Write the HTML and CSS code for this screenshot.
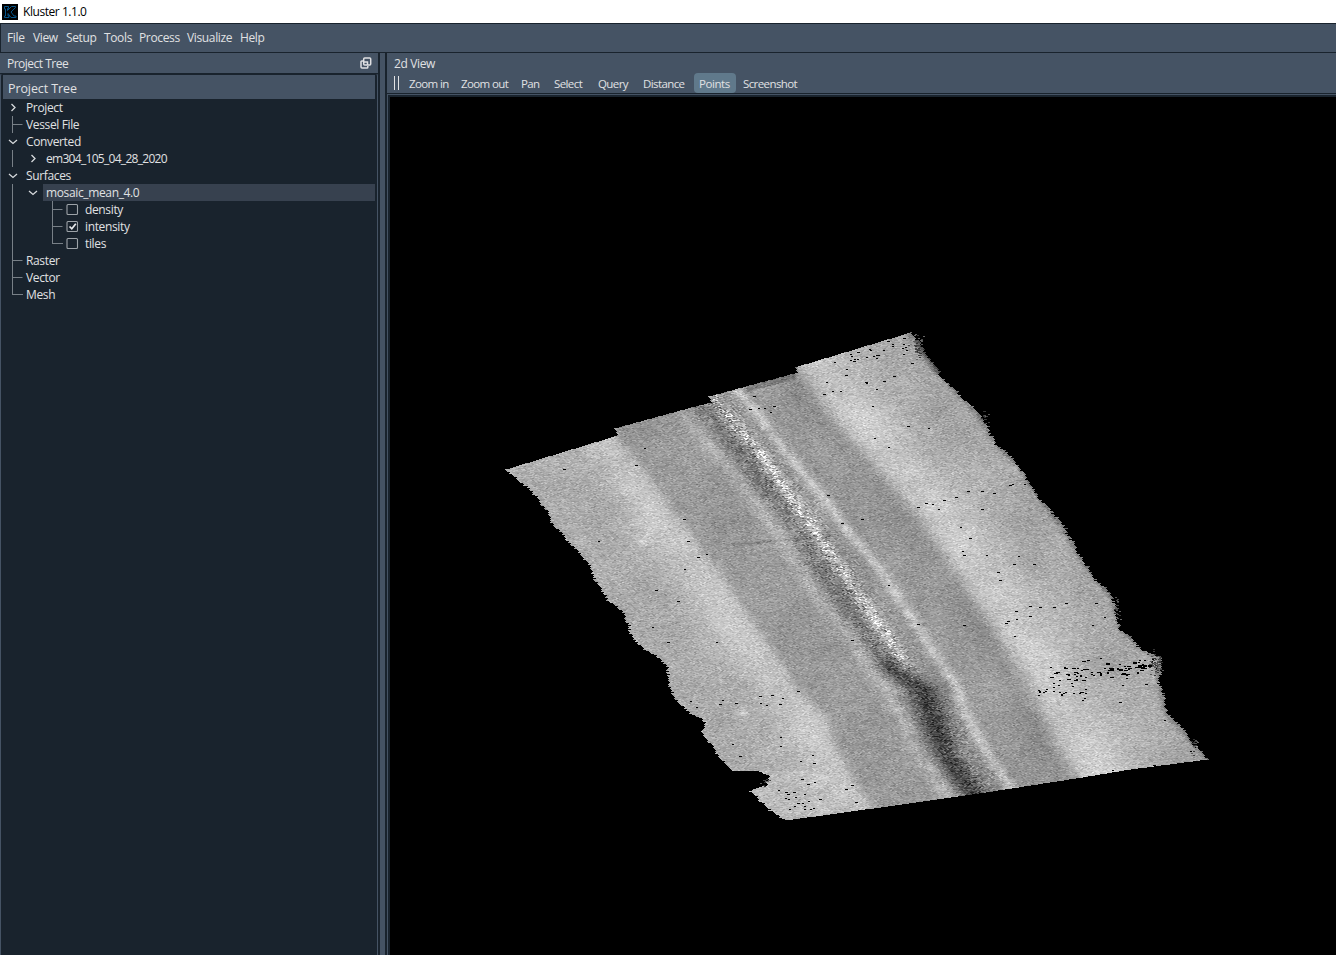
FILE: index.html
```html
<!DOCTYPE html>
<html lang="en">
<head>
<meta charset="utf-8">
<title>Kluster 1.1.0</title>
<link rel="stylesheet" href="styles.css">
</head>
<body>
<div class="window">
  <header class="titlebar">
    <svg class="logo" width="16" height="16" viewBox="0 0 16 16"><rect width="16" height="16" fill="#000"/><path d="M2.500 2.500h4v2h-1v2l4-4h4v1l-4.500 4.500 3 4h2v1.500h-5l-3-4v2.500h1v1.500h-4.500v-1.500h1v-7h-1z" fill="none" stroke="#07568b" stroke-width="1"/></svg>
    <span>Kluster 1.1.0</span>
  </header>
  <nav class="menubar">
    <span class="m-file">File</span><span class="m-view">View</span><span class="m-setup">Setup</span><span class="m-tools">Tools</span><span class="m-process">Process</span><span class="m-visualize">Visualize</span><span>Help</span>
  </nav>
  <main class="workspace">
    <aside class="dock">
      <div class="dock-title"><span>Project Tree</span>
        <svg width="12" height="12" viewBox="0 0 12 12" fill="none" stroke="#e0e1e3" stroke-width="1.500"><rect x="3.700" y="1" width="7" height="7" rx="1"/><path d="M3 4H1.700Q1 4 1 4.700V10q0 1 1 1h5q.8 0 .8-.8V9"/><path d="M4 5h3.500v3"/></svg>
      </div>
      <div class="tree-frame">
        <div class="tree-head">Project Tree</div>
        <div class="tree">
          <svg class="branches" width="80" height="204" viewBox="0 0 80 204" fill="none">
            <g stroke="#788087" stroke-width="1">
              <path d="M10.500 17v17M10.500 51v17M10.500 85v111M10.500 25.500h10M10.500 161.500h10M10.500 178.500h10M10 195.500h11"/>
              <path d="M50.500 102v43M50.500 110.500h10M50.500 127.500h10M50 144.500h11"/>
            </g>
            <g stroke="#d7dadd" stroke-width="1.300">
              <path d="M9.500 5l3.500 3.500L9.500 12M29.500 56l3.500 3.500L29.500 63"/>
              <path d="M7 41l4 3.500 4-3.500M7 75l4 3.500 4-3.500M27 92l4 3.500 4-3.500"/>
            </g>
            <g stroke="#9da3a8" stroke-width="1.100">
              <rect x="65" y="105.500" width="10.500" height="10" rx="1"/><rect x="65" y="122.500" width="10.500" height="10" rx="1"/><rect x="65" y="139.500" width="10.500" height="10" rx="1"/>
            </g>
            <path d="M67.500 127.500l2.300 2.300 4-5" stroke="#e8eaec" stroke-width="1.700"/>
          </svg>
          <div class="row l1">Project</div>
          <div class="row l1">Vessel File</div>
          <div class="row l1">Converted</div>
          <div class="row l2 tight">em304_105_04_28_2020</div>
          <div class="row l1">Surfaces</div>
          <div class="row l2 selected">mosaic_mean_4.0</div>
          <div class="row l3">density</div>
          <div class="row l3">intensity</div>
          <div class="row l3">tiles</div>
          <div class="row l1">Raster</div>
          <div class="row l1">Vector</div>
          <div class="row l1">Mesh</div>
        </div>
      </div>
    </aside>
    <div class="splitter"></div>
    <section class="view">
      <div class="view-title">2d View</div>
      <div class="toolbar">
        <i class="grip"></i>
        <span class="t-in">Zoom in</span><span class="t-out">Zoom out</span><span class="t-pan">Pan</span><span class="t-select">Select</span><span class="t-query">Query</span><span class="t-distance">Distance</span><span class="t-points">Points</span><span class="t-shot">Screenshot</span>
      </div>
      <div class="map"><canvas id="mosaic" width="946" height="858"></canvas></div>
    </section>
  </main>
</div>
<script src="mosaic.js"></script>
</body>
</html>
```
FILE: styles.css
```css
* { box-sizing: border-box; }
body { margin: 0; overflow: hidden; background: #19232d; }
.window {
  width: 1336px; height: 955px; display: flex; flex-direction: column;
  font: 12px/17px "Open Sans", "Noto Sans", sans-serif;
  letter-spacing: -0.36px; color: #e0e1e3; white-space: nowrap;
}
.titlebar {
  height: 23px; background: #fff; color: #000; display: flex;
  align-items: center; gap: 5px; padding-left: 2px; flex: none; letter-spacing: -0.45px;
}
.logo { display: block; }
.menubar {
  height: 30px; flex: none; background: #455364; display: flex; align-items: center;
  border: 1px solid #19232d; border-right: 0; padding: 0 0 1px 6px;
}
.m-file { width: 26px; }
.m-view { width: 33px; }
.m-setup { width: 38px; }
.m-tools { width: 35px; }
.m-process { width: 48px; }
.m-visualize { width: 53px; }
.workspace { flex: 1; min-height: 0; display: flex; }
.dock { width: 378px; display: flex; flex-direction: column; }
.dock-title {
  height: 20px; background: #455364; display: flex; align-items: center;
  justify-content: space-between; padding: 1px 6px 0 7px; letter-spacing: -0.5px;
}
.dock-title svg { margin-top: -2px; }
.tree-frame {
  flex: 1; border: 1px solid #455364; border-top-color: #19232d; border-bottom: 0;
  border-radius: 3px 3px 0 0; padding: 1px 2px 0 1px; background: #19232d;
}
.tree-head {
  height: 24px; margin-left: 1px; background: #455364; padding: 5px 0 0 5px;
  font-size: 12.500px; letter-spacing: -0.1px;
}
.tree { display: flex; flex-direction: column; position: relative; }
.branches { position: absolute; left: 0; top: 0; }
.row { height: 17px; }
.l1 { padding-left: 24px; }
.l2 { margin-left: 41px; padding-left: 3px; }
.tight { letter-spacing: -0.7px; }
.l3 { padding-left: 83px; }
.selected { background: #37414f; }
.splitter {
  width: 9px; flex: none; background: #455364;
  border-left: 2px solid #19232d; border-right: 2px solid #19232d;
}
.view { flex: 1; display: flex; flex-direction: column; background: #455364; }
.view-title { height: 20px; padding: 2px 0 0 7px; }
.toolbar {
  height: 21px; border-bottom: 1px solid #19232d; display: flex; align-items: center;
  padding-left: 7px; font-size: 11.500px; letter-spacing: -0.6px; line-height: 20px;
}
.toolbar span { padding-top: 1px; }
.grip { width: 5px; height: 14px; margin-right: 10px; border: 1px solid #e0e1e3; border-width: 0 1px; }
.t-in { width: 52px; }
.t-out { width: 60px; }
.t-pan { width: 33px; }
.t-select { width: 44px; }
.t-query { width: 45px; }
.t-distance { width: 51px; }
.toolbar .t-points { width: 42px; height: 20px; padding-left: 5px; background: #60798b; border-radius: 4px; letter-spacing: -0.45px; }
.t-shot { padding-left: 7px; }
.map {
  flex: 1; margin-left: 1px; border-left: 2px solid #19232d;
  margin-top: 1px; border-top: 2px solid #19232d; background: #000; overflow: hidden;
}
#mosaic { display: block; }
```
FILE: mosaic.js
```js
// Draws the sonar intensity mosaic; survey coordinates are window pixels.
const OX = 390, OY = 97;
const canvas = document.getElementById('mosaic');
const ctx = canvas.getContext('2d');
let seed = 92731;
function rnd() {
  seed = (seed + 0x6D2B79F5) | 0;
  let t = Math.imul(seed ^ (seed >>> 15), 1 | seed);
  t = (t + Math.imul(t ^ (t >>> 7), 61 | t)) ^ t;
  return ((t ^ (t >>> 14)) >>> 0) / 4294967296;
}
const gauss = () => rnd() + rnd() + rnd() + rnd() - 2;
// Smooth value noise, used for patchiness a few pixels across
const lattice = Array.from({ length: 4096 }, () => rnd() * 2 - 1);
function patch(x, y) {
  const i = Math.floor(x), j = Math.floor(y), u = x - i, v = y - j;
  const g = (a, b) => lattice[((a & 63) << 6) | (b & 63)];
  return (g(i, j) * (1 - u) + g(i + 1, j) * u) * (1 - v) + (g(i, j + 1) * (1 - u) + g(i + 1, j + 1) * u) * v;
}
// x position of a [x, y] polyline at height y, extrapolated past its ends
function at(line, y) {
  let i = 0;
  while (i < line.length - 2 && y > line[i + 1][1]) i++;
  const [x0, y0] = line[i], [x1, y1] = line[i + 1];
  return x0 + (x1 - x0) * (y - y0) / (y1 - y0);
}
const left = [[505,469],[515,478],[533,492],[545,510],[551,520],[553,525],[566,540],[575,550],[590,568],[597,585],[607,600],[622,611],[627,625],[637,644],[656,656],[667,667],[668,686],[677,700],[690,714],[706,722],[701,732],[711,745],[721,759],[731,770],[758,771],[768,776],[766,784],[750,791],[757,798],[770,810],[785,820]];
const right = [[910,332],[919,345],[930,360],[940,374],[957,392],[966,400],[978,415],[988,432],[1002,450],[1020,468],[1030,484],[1045,505],[1060,524],[1072,543],[1081,560],[1100,584],[1114,600],[1119,628],[1143,650],[1160,658],[1158,672],[1162,695],[1167,715],[1183,730],[1195,746],[1207,759]];
const top_ = [[505,469],[617,435],[614,428],[698,405],[711,402],[708,396],[797,372],[794,367],[910,332]];
const bottom = [[1207,759],[1130,769],[1075,778],[985,792],[872,808],[785,820]];
const outerLeft = [[617,435],[640,465],[672,508],[710,560],[745,610],[780,660],[805,695],[826,717],[835,745],[855,780],[875,808]];
const stripeLeft = [[683,408],[690,420],[712,450],[735,475],[752,500],[780,535],[797,565],[820,600],[845,630],[862,655],[885,690],[900,715],[912,745],[930,770],[948,797]];
const dark = [[705,405],[738,450],[785,510],[812,550],[845,600],[868,635],[890,668],[920,690],[930,715],[945,755],[970,792]];
const speckle = [[712,398],[735,425],[763,457],[788,493],[820,540],[844,575],[874,620],[893,648],[908,670]];
const stripeRight = [[737,392],[750,405],[785,452],[825,500],[850,535],[880,570],[910,615],[925,640],[955,685],[965,715],[985,750],[1010,788]];
const outerRight = [[797,368],[815,400],[850,440],[880,475],[915,515],[945,560],[975,605],[1005,650],[1035,700],[1050,740],[1075,778]];
const shape = new Path2D();
[...top_, ...right.slice(1), ...bottom.slice(1), ...left.slice(1, -1).reverse()]
  .forEach(([x, y], i) => i ? shape.lineTo(x, y) : shape.moveTo(x, y));
shape.closePath();
const bell = (d, w) => Math.exp(-(d * d) / (w * w));
const smooth = (d, w) => 1 / (1 + Math.exp(-d / w));
function topEdge(x) {
  return x < 615 ? 469 - (x - 505) * .304 : x < 709 ? 428 - (x - 614) * .273
    : x < 795 ? 396 - (x - 708) * .27 : 367 - (x - 794) * .302;
}
for (let y = 330; y < 823; y++) {
  const a = at(outerLeft, y), b = at(stripeLeft, y), c = at(dark, y), d = at(speckle, y);
  const e = at(stripeRight, y), f = at(outerRight, y);
  const l = at(left, y), r = at(right, y);
  const jl = gauss() * 1.400 + patch(3, y / 5) * 2, jr = gauss() * 1.500 + patch(9, y / 6) * 2.500;
  for (let x = 500 + (y % 2); x < 1210; x += 2) {
    const shift = y > 757 && x > 900 ? 0 : x < 800 && y > 469 ? jl : x > 920 ? jr : 0;
    if (!ctx.isPointInPath(shape, x + shift, y)) continue;
    const blotch = patch(x / 6, y / 4);
    let v = 153;
    v += smooth(a - x, 3) * (19 + 25 * bell(a - 18 - x, 34));
    v += smooth(x - f, 4) * (15 + 33 * bell(x - f - 26, 44));
    v -= 7 * bell(f - x - 8, 18);
    v += (24 + 10 * blotch) * bell(x - b, 9);
    v += (44 + 12 * blotch) * bell(x - e, 7);
    const low = smooth(y - 661, 6);
    v -= (1 - low) * (27 + 22 * blotch) * bell(x - c, 16);
    v -= low * (74 + 14 * blotch) * bell(x - c, 14);
    v -= low * 14 * bell(x - c - 14, 22);
    const s = bell(x - d, 8) * (1 - smooth(y - 665, 5));
    v += s * (46 + 40 * blotch);
    const center = bell(x - (c + d) / 2, 24);
    v += gauss() * (20 + 20 * center + 28 * s);
    // Soft large scale variation along the swaths
    v += 4 * blotch + 7 * patch(x / 24, y / 18) + 3 * Math.sin(x / 25 + y / 38);
    const te = y - topEdge(x);
    if (x > 615 && x < 700 && te < 22) v -= 5;
    if (x > 745 && x < 797 && te < 6) v -= 28;
    if (x > 905 && y < 375) v -= 40 * bell(r - x, 7);
    if (x > 915) v -= 60 * smooth(3 - (r - x), 1.500) * (0.5 + rnd() * .5);
    if (x < l + 60 && y > 770) v += 12;
    v += 28 * bell(x - 642, 5) * bell(y - 541, 4) + 38 * bell(x - 742, 6) * bell(y - 713, 3) + 20 * bell(x - 580, 8) * bell(y - 541, 5);
    v -= 22 * bell(y - (544 - (x - 735) * .09), 1.500) * (x > 730 && x < 815 ? 1 : 0);
    v = Math.max(28, Math.min(255, v)) | 0;
    ctx.fillStyle = `rgb(${v},${v},${v})`;
    ctx.fillRect(x - OX, y - OY, 2, 1);
  }
}
// Cells without soundings
const gaps = [[563,469],[644,448],[635,465],[598,541],[683,519],[687,541],[697,557],[706,554],[684,569],[655,590],[677,601],[652,627],[667,642],[716,642],[753,396],[749,409],[758,408],[764,408],[773,406],[770,412],[827,495],[841,523],[861,519],[888,585],[917,624],[963,625],[851,640],[826,382],[834,362],[853,361],[845,375],[823,394],[832,391],[840,391],[876,389],[872,406],[874,438],[888,447],[907,426],[928,428],[866,383],[893,376],[865,382],[883,381],[876,355],[902,348],[892,346],[911,363],[846,369],[838,352],[857,352],[870,350],[887,341],[903,338],[917,507],[925,503],[932,504],[943,500],[955,497],[967,491],[981,491],[993,493],[1009,485],[1012,484],[1024,484],[938,509],[981,509],[960,527],[969,538],[962,551],[963,555],[986,555],[1013,564],[1018,556],[997,572],[999,580],[1033,564],[1015,611],[1029,606],[1039,607],[1053,607],[1065,603],[1095,603],[1104,617],[1029,616],[1016,619],[1005,623],[1007,621],[1014,636],[1092,625],[797,691],[771,695],[759,696],[782,698],[779,704],[766,705],[760,703],[735,703],[722,700],[719,704],[690,701],[696,707],[780,737],[780,746],[732,744],[739,756],[812,755],[800,761],[813,763],[801,779],[814,782],[807,784],[785,792],[793,792],[787,794],[845,789],[851,785],[855,802],[819,799],[804,809],[810,809],[788,799],[797,803],[804,806],[740,786],[1050,667],[1087,660],[1100,658],[1138,662],[1164,720],[1190,751],[1112,770],[1153,765],[1119,702],[1122,685],[1145,684]];
ctx.fillStyle = '#000';
for (const [x, y] of gaps) ctx.fillRect(x - OX, y - OY, 2 + (x % 2), 1);
for (let i = 0; i < 85; i++) {
  const x = 1043 + Math.pow(rnd(), .75) * 113;
  const y = 679 - (x - 1043) * .14 + gauss() * 7;
  ctx.fillRect(Math.round(x - OX), Math.round(y - OY), rnd() < .4 ? 4 : 2, rnd() < .15 ? 2 : 1);
}
for (let i = 0; i < 25; i++) {
  ctx.fillRect(Math.round(1038 - OX + rnd() * 48), Math.round(692 - OY + gauss() * 5), 2, 1);
}
for (let i = 0; i < 16; i++) {
  const x = 847 + rnd() * 60;
  ctx.fillRect(Math.round(x - OX), Math.round(353 - OY - (x - 847) * .2 + rnd() * 14), 2, 1);
}
for (let i = 0; i < 10; i++) {
  ctx.fillRect(Math.round(774 - OX + rnd() * 45), Math.round(790 - OY + rnd() * 20), 2, 1);
}
ctx.fillRect(1110 - OX, 668 - OY, 4, 3);
ctx.fillRect(1138 - OX, 665 - OY, 4, 3);
// Loose returns beyond the outer beams
for (const [cx, cy, w, h, n] of [[917,346,5,10,55],[983,418,3,6,16],[1116,610,3,12,26],[1155,663,6,9,70],[1193,744,4,7,20],[766,781,4,4,12]]) {
  for (let i = 0; i < n; i++) {
    const v = 45 + rnd() * 65 | 0;
    ctx.fillStyle = `rgb(${v},${v},${v})`;
    ctx.fillRect(Math.round(cx + gauss() * w - OX), Math.round(cy + gauss() * h - OY), 2, 1);
  }
}
```
